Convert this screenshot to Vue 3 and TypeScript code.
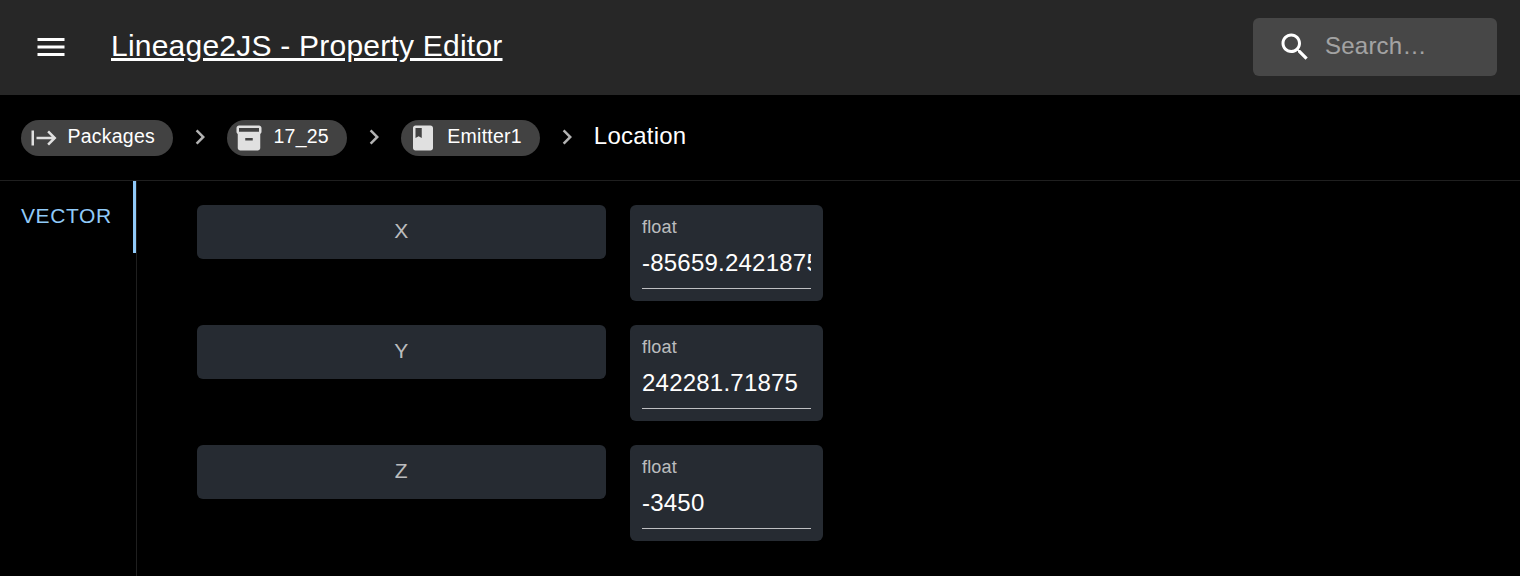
<script setup lang="ts">
import { ref } from 'vue'

interface Crumb {
  label: string
  icon: string
}

interface Field {
  name: string
  type: string
  value: string
}

const crumbs: Crumb[] = [
  {
    label: 'Packages',
    icon: 'm14.59 7.41L18.17 11H6v2h12.17l-3.59 3.59L16 18l6-6-6-6-1.41 1.41zM2 6v12h2V6H2z',
  },
  {
    label: '17_25',
    icon: 'M20 2H4c-1 0-2 .9-2 2v3.01c0 .72.43 1.34 1 1.69V20c0 1.1 1.1 2 2 2h14c.9 0 2-.9 2-2V8.7c.57-.35 1-.97 1-1.69V4c0-1.1-1-2-2-2zm-5 12H9v-2h6v2zm5-7H4V4l16-.02V7z',
  },
  {
    label: 'Emitter1',
    icon: 'M18 2H6c-1.1 0-2 .9-2 2v16c0 1.1.9 2 2 2h12c1.1 0 2-.9 2-2V4c0-1.1-.9-2-2-2zM6 4h5v8l-2.5-1.5L6 12V4z',
  },
]

const fields = ref<Field[]>([
  { name: 'X', type: 'float', value: '-85659.2421875' },
  { name: 'Y', type: 'float', value: '242281.71875' },
  { name: 'Z', type: 'float', value: '-3450' },
])

const search = ref('')
</script>

<template>
  <div class="app">
    <header class="bar">
      <button class="menu" aria-label="menu">
        <svg viewBox="0 0 24 24"><path d="M3 18h18v-2H3v2zm0-5h18v-2H3v2zm0-7v2h18V6H3z" /></svg>
      </button>
      <a class="title">Lineage2JS - Property Editor</a>
      <label class="search">
        <svg viewBox="0 0 24 24">
          <path
            d="M15.5 14h-.79l-.28-.27C15.41 12.59 16 11.11 16 9.5 16 5.91 13.09 3 9.5 3S3 5.91 3 9.5 5.91 16 9.5 16c1.61 0 3.09-.59 4.23-1.57l.27.28v.79l5 4.99L20.49 19l-4.99-5zm-6 0C7.01 14 5 11.99 5 9.5S7.01 5 9.5 5 14 7.01 14 9.5 11.99 14 9.5 14z"
          />
        </svg>
        <input v-model="search" placeholder="Search…" aria-label="search" />
      </label>
    </header>

    <nav class="crumbs">
      <template v-for="crumb in crumbs" :key="crumb.label">
        <a class="chip">
          <svg viewBox="0 0 24 24"><path :d="crumb.icon" /></svg>
          <span>{{ crumb.label }}</span>
        </a>
        <svg class="next" viewBox="0 0 24 24">
          <path d="M10 6 8.59 7.41 13.17 12l-4.58 4.59L10 18l6-6z" />
        </svg>
      </template>
      <span class="current">Location</span>
    </nav>

    <main class="content">
      <aside class="tabs">
        <button class="tab">VECTOR</button>
      </aside>
      <section class="rows">
        <div v-for="field in fields" :key="field.name" class="row">
          <div class="name">{{ field.name }}</div>
          <label class="field">
            <span class="type">{{ field.type }}</span>
            <input v-model="field.value" />
          </label>
        </div>
      </section>
    </main>
  </div>
</template>

<style>
body {
  background: #000;
}
</style>

<style scoped>
.app {
  display: flex;
  flex-direction: column;
  height: 576px;
  overflow: hidden;
  box-sizing: border-box;
  background: #000;
  color: #fff;
  font-family: 'Liberation Sans', Arial, sans-serif;
  font-size: 24px;
  letter-spacing: 0.225px;
}

.app * {
  box-sizing: border-box;
}

svg {
  display: block;
  flex: none;
  fill: currentColor;
}

button,
input {
  margin: 0;
  padding: 0;
  border: 0;
  outline: 0;
  background: none;
  color: inherit;
  font: inherit;
  letter-spacing: inherit;
}

.bar {
  display: flex;
  flex: none;
  align-items: center;
  height: 95px;
  padding: 0 23px 1px 33px;
  background: #272727;
}

.menu svg,
.search svg {
  width: 36px;
  height: 36px;
}

.title {
  flex: 1;
  margin-left: 42px;
  padding-bottom: 2px;
  font-size: 30px;
  line-height: 48px;
  text-decoration: underline;
}

.search {
  display: flex;
  align-items: center;
  width: 244px;
  height: 58px;
  padding-left: 24px;
  border-radius: 6px;
  background: #474747;
}

.search input {
  width: 160px;
  height: 36px;
  margin-left: 12px;
  padding-bottom: 2px;
}

.search input::placeholder {
  color: #fff;
  opacity: 0.5;
}

.crumbs {
  display: flex;
  flex: none;
  align-items: center;
  height: 86px;
  padding: 0 21px;
  border-bottom: 1px solid #1f1f1f;
}

.chip {
  display: flex;
  align-items: center;
  height: 36px;
  padding: 0 18px 0 7.5px;
  border-radius: 18px;
  background: #424242;
  font-size: 19.5px;
  letter-spacing: 0.23px;
}

.chip svg {
  width: 30px;
  height: 30px;
  margin-right: 9px;
  color: #e0e0e0;
}

.chip span {
  line-height: 29px;
  padding-bottom: 2px;
}

.next {
  width: 30px;
  height: 32px;
  margin: 0 12px;
  padding-bottom: 2px;
  color: rgba(255, 255, 255, 0.7);
}

.current {
  line-height: 36px;
  padding-bottom: 4px;
}

.content {
  display: flex;
  flex: 1;
}

.tabs {
  flex: none;
  width: 137px;
  border-right: 1px solid #1f1f1f;
}

.tab {
  width: 136px;
  height: 72px;
  padding: 0 0 2px 21px;
  border-right: 3px solid #90caf9;
  color: #90caf9;
  font-size: 21px;
  letter-spacing: 0.6px;
  text-align: left;
}

.rows {
  display: flex;
  flex-direction: column;
  gap: 24px;
  padding: 24px 60px;
}

.row {
  display: flex;
  align-items: flex-start;
  gap: 24px;
}

.name {
  width: 409px;
  height: 54px;
  padding-right: 0.5px;
  border-radius: 6px;
  background: #262b32;
  color: rgba(255, 255, 255, 0.7);
  font-size: 21px;
  line-height: 52px;
  text-align: center;
}

.field {
  display: flex;
  flex-direction: column;
  width: 193px;
  height: 96px;
  padding: 12px;
  border-radius: 6px;
  background: #262b32;
}

.type {
  height: 24px;
  color: rgba(255, 255, 255, 0.7);
  font-size: 18px;
  line-height: 20px;
  letter-spacing: 0.17px;
}

.field input {
  width: 169px;
  height: 48px;
  padding-bottom: 4px;
  border-bottom: 1px solid rgba(255, 255, 255, 0.7);
}
</style>
